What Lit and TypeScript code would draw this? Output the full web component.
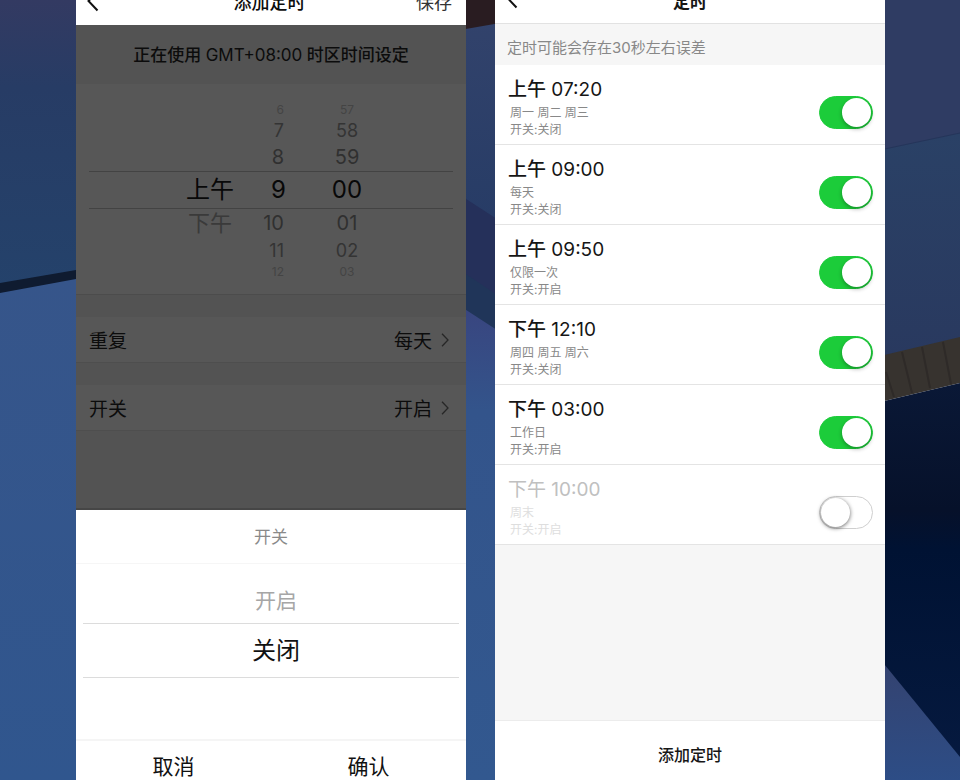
import { LitElement, html, css, svg } from "lit";
import { customElement, property, state } from "lit/decorators.js";

const fontStack = css`Inter, "Noto Sans CJK SC", sans-serif`;

const backIcon = svg`<svg class="back-icon" viewBox="0 0 12 22" aria-hidden="true"><path d="M10.5 1.5 1.5 11l9 9.5" fill="none" stroke="#111" stroke-width="2"/></svg>`;

interface WheelRow {
  period: string;
  hour: string;
  minute: string;
  level: string;
}

const wheel: WheelRow[] = [
  { period: "", hour: "6", minute: "57", level: "edge" },
  { period: "", hour: "7", minute: "58", level: "far" },
  { period: "", hour: "8", minute: "59", level: "near" },
  { period: "上午", hour: "9", minute: "00", level: "current" },
  { period: "下午", hour: "10", minute: "01", level: "near" },
  { period: "", hour: "11", minute: "02", level: "far" },
  { period: "", hour: "12", minute: "03", level: "edge" },
];

interface Timer {
  period: string;
  time: string;
  days: string;
  action: string;
  on: boolean;
}

/* Editor for one timer, with the on/off sheet open over it. */
@customElement("timer-editor")
export class TimerEditor extends LitElement {
  static styles = css`
    :host {
      display: flex;
      flex-direction: column;
      background: #535353;
      color: #0c0c0c;
      font-family: ${fontStack};
    }
    button {
      border: 0;
      padding: 0;
      background: none;
      color: inherit;
      font: inherit;
      cursor: pointer;
    }
    .bar {
      display: grid;
      grid-template-columns: 1fr auto 1fr;
      grid-template-rows: 100%;
      align-items: end;
      height: 25px;
      box-sizing: border-box;
      padding: 0 14px 9px 11px;
      overflow: hidden;
      background: #fff;
      font-size: 18px;
      line-height: 26px;
    }
    .bar h1 {
      margin: 0;
      font-size: 18px;
      font-weight: 500;
    }
    .back {
      display: flex;
      justify-self: start;
      padding-bottom: 4px;
    }
    .back-icon {
      width: 12px;
      height: 22px;
    }
    .save {
      justify-self: end;
      color: #333;
    }
    .zone {
      margin: 0;
      padding: 17px 0 16px;
      font-size: 17px;
      font-weight: 500;
      line-height: 26px;
      text-align: center;
      white-space: nowrap;
    }
    .offset {
      font-weight: 400;
    }
    .wheel {
      padding: 17px 13px 15px;
      background: #575757;
      border-bottom: 1px solid #4c4c4c;
    }
    .row {
      display: grid;
      grid-template-columns: 48px 52px 32px;
      justify-content: center;
      align-items: center;
      padding-left: 7px;
      padding-right: 45px;
      white-space: nowrap;
    }
    .period {
      text-align: center;
    }
    .hour {
      text-align: right;
      padding-right: 2px;
    }
    .minute {
      width: 32px;
      margin-left: 45px;
      text-align: center;
    }
    .edge {
      height: 16px;
      font-size: 12px;
      color: #444;
    }
    .far {
      height: 26px;
      font-size: 18px;
      color: #343434;
    }
    .near {
      height: 28px;
      font-size: 20px;
      color: #303030;
    }
    .near .period {
      font-size: 22px;
      line-height: 28px;
      color: #3a3a3a;
    }
    .current {
      height: 36px;
      border: solid #434343;
      border-width: 1px 0;
      font-size: 24px;
      line-height: 34px;
      color: #080808;
    }
    .current .hour {
      padding-right: 0;
    }
    .setting {
      display: flex;
      align-items: center;
      width: 100%;
      height: 46px;
      margin-top: 22px;
      padding: 0 17px 0 13px;
      background: #575757;
      border-bottom: 1px solid #4e4e4e;
      font-size: 19px;
    }
    .setting .value {
      margin-left: auto;
      margin-right: 9px;
    }
    .chevron {
      width: 8px;
      height: 14px;
    }
    .rest {
      flex: 1;
      min-height: 60px;
      border-bottom: 2px solid #464646;
    }
    .sheet {
      background: #fff;
      color: #111;
    }
    .sheet h2 {
      margin: 0;
      padding: 14px 0 13px;
      border-bottom: 1px solid #f6f6f6;
      color: #8a8a8a;
      font-size: 17px;
      font-weight: 400;
      line-height: 26px;
      text-align: center;
    }
    .options {
      padding: 23px 7px 61px;
      text-align: center;
    }
    .option {
      text-indent: 10px;
      font-size: 21px;
      line-height: 28px;
      padding-bottom: 8px;
      color: #a6a6a6;
    }
    .option.chosen {
      padding: 0;
      border: solid #dcdcdc;
      border-width: 1px 0;
      color: #111;
      font-size: 24px;
      line-height: 53px;
    }
    .actions {
      display: grid;
      grid-template-columns: 1fr 1fr;
      padding-top: 13px;
      border-top: 2px solid #f5f5f5;
      font-size: 21px;
      line-height: 26px;
    }
  `;

  private chevron() {
    return html`<svg class="chevron" viewBox="0 0 8 14" aria-hidden="true">
      <path d="M1 0.8 7 7l-6 6.2" fill="none" stroke="#272727" stroke-width="1.3" />
    </svg>`;
  }

  render() {
    return html`
      <header class="bar">
        <button class="back" aria-label="返回">${backIcon}</button>
        <h1>添加定时</h1>
        <button class="save">保存</button>
      </header>
      <p class="zone">正在使用 <span class="offset">GMT+08:00</span> 时区时间设定</p>
      <div class="wheel">
        ${wheel.map(
          (r) => html`<div class="row ${r.level}">
            <span class="period">${r.period}</span>
            <span class="hour">${r.hour}</span>
            <span class="minute">${r.minute}</span>
          </div>`
        )}
      </div>
      <button class="setting"><span>重复</span><span class="value">每天</span>${this.chevron()}</button>
      <button class="setting"><span>开关</span><span class="value">开启</span>${this.chevron()}</button>
      <div class="rest"></div>
      <section class="sheet">
        <h2>开关</h2>
        <div class="options" role="listbox" aria-label="开关">
          <div class="option" role="option" aria-selected="false">开启</div>
          <div class="option chosen" role="option" aria-selected="true">关闭</div>
        </div>
        <div class="actions">
          <button>取消</button>
          <button>确认</button>
        </div>
      </section>
    `;
  }
}

/* One timer of the list, with its switch. */
@customElement("timer-item")
export class TimerItem extends LitElement {
  @property({ attribute: false }) timer!: Timer;

  static styles = css`
    :host {
      display: block;
      background: #fff;
      border-bottom: 1px solid #e4e4e4;
    }
    .item {
      display: flex;
      justify-content: space-between;
      align-items: flex-start;
      padding: 12px 12px 6px 13px;
      color: #161616;
    }
    .time {
      display: block;
      margin-bottom: 1px;
      font-size: 19px;
      line-height: 26px;
    }
    .period {
      font-weight: 500;
    }
    .detail {
      display: block;
      padding-left: 2px;
      color: #888;
      font-size: 12px;
      line-height: 17px;
    }
    .off .time {
      color: #c0c0c0;
    }
    .off .period {
      font-weight: 400;
    }
    .off .detail {
      color: #dedede;
    }
    .switch {
      appearance: none;
      display: flex;
      flex: none;
      box-sizing: border-box;
      width: 54px;
      height: 33px;
      margin: 19px 0 0;
      padding: 1px;
      border: 1px solid #1ccc3a;
      border-radius: 17px;
      background: #1ccc3a;
      cursor: pointer;
    }
    .switch::before {
      content: "";
      width: 29px;
      height: 29px;
      margin-left: auto;
      border-radius: 50%;
      background: #fff;
      box-shadow: 0 2px 4px rgba(0, 0, 0, 0.3);
    }
    .switch:not(:checked) {
      border: 1px solid #cfcfcf;
      background: #fff;
    }
    .switch:not(:checked)::before {
      margin-left: 0;
      box-shadow: 0 1px 4px rgba(0, 0, 0, 0.6);
    }
  `;

  private toggle(e: Event) {
    this.timer = { ...this.timer, on: (e.target as HTMLInputElement).checked };
  }

  render() {
    const { period, time, days, action, on } = this.timer;
    return html`<label class="item ${on ? "" : "off"}">
      <span>
        <span class="time"><span class="period">${period}</span> ${time}</span>
        <span class="detail">${days}</span>
        <span class="detail">开关:${action}</span>
      </span>
      <input class="switch" type="checkbox" role="switch" .checked=${on} @change=${this.toggle} />
    </label>`;
  }
}

/* List of all timers. */
@customElement("timer-list")
export class TimerList extends LitElement {
  @state() private timers: Timer[] = [
    { period: "上午", time: "07:20", days: "周一 周二 周三", action: "关闭", on: true },
    { period: "上午", time: "09:00", days: "每天", action: "关闭", on: true },
    { period: "上午", time: "09:50", days: "仅限一次", action: "开启", on: true },
    { period: "下午", time: "12:10", days: "周四 周五 周六", action: "关闭", on: true },
    { period: "下午", time: "03:00", days: "工作日", action: "开启", on: true },
    { period: "下午", time: "10:00", days: "周末", action: "开启", on: false },
  ];

  static styles = css`
    :host {
      display: flex;
      flex-direction: column;
      background: #f6f6f6;
      color: #161616;
      font-family: ${fontStack};
    }
    .bar {
      display: grid;
      grid-template-columns: 1fr auto 1fr;
      grid-template-rows: 100%;
      align-items: end;
      height: 24px;
      box-sizing: border-box;
      padding: 0 11px 8px;
      overflow: hidden;
      background: #fff;
      border-bottom: 1px solid #e2e2e2;
    }
    .bar h1 {
      margin: 0;
      font-size: 17px;
      font-weight: 700;
      line-height: 26px;
    }
    .back {
      display: flex;
      justify-self: start;
      padding: 0 0 6px;
      border: 0;
      background: none;
    }
    .back-icon {
      width: 12px;
      height: 22px;
    }
    .note {
      margin: 0;
      padding: 12px 12px 5px;
      color: #888;
      font-size: 15px;
      line-height: 24px;
    }
    .rest {
      flex: 1;
    }
    .add {
      padding: 22px 0 13px;
      border: 0;
      border-top: 1px solid #ececec;
      background: #fff;
      color: #161616;
      font-family: inherit;
      font-size: 16px;
      font-weight: 500;
      line-height: 24px;
      cursor: pointer;
    }
  `;

  render() {
    return html`
      <header class="bar">
        <button class="back" aria-label="返回">${backIcon}</button>
        <h1>定时</h1>
      </header>
      <p class="note">定时可能会存在30秒左右误差</p>
      ${this.timers.map((t) => html`<timer-item .timer=${t}></timer-item>`)}
      <div class="rest"></div>
      <button class="add">添加定时</button>
    `;
  }
}

@customElement("app-root")
export class AppRoot extends LitElement {
  static styles = css`
    :host {
      display: block;
      position: relative;
    }
    .backdrop {
      position: absolute;
      inset: 0;
      width: 100%;
      height: 100%;
    }
    .screens {
      position: relative;
      display: grid;
      grid-template-columns: 1fr 1fr;
      gap: 29px;
      min-height: 100vh;
      box-sizing: border-box;
      padding: 0 75px 0 76px;
    }
  `;

  render() {
    return html`
      <svg class="backdrop" viewBox="0 0 960 780" preserveAspectRatio="none" aria-hidden="true">
        <defs>
          <linearGradient id="wall" x2="0" y2="1">
            <stop offset="0" stop-color="#333a62" />
            <stop offset="0.3" stop-color="#273c65" />
            <stop offset="1" stop-color="#24426b" />
          </linearGradient>
          <linearGradient id="floor" x2="0" y2="1">
            <stop offset="0" stop-color="#36558a" />
            <stop offset="1" stop-color="#30568e" />
          </linearGradient>
          <linearGradient id="mid" x2="0" y2="1">
            <stop offset="0" stop-color="#39457f" />
            <stop offset="0.22" stop-color="#33548b" />
            <stop offset="1" stop-color="#32588f" />
          </linearGradient>
          <linearGradient id="column" x2="0" y2="1">
            <stop offset="0" stop-color="#33436c" />
            <stop offset="1" stop-color="#273c66" />
          </linearGradient>
          <linearGradient id="panel" x2="0" y2="1">
            <stop offset="0" stop-color="#2a4166" />
            <stop offset="1" stop-color="#29395f" />
          </linearGradient>
          <linearGradient id="navy" x2="0" y2="1">
            <stop offset="0" stop-color="#0a1836" />
            <stop offset="0.32" stop-color="#06112a" />
            <stop offset="0.42" stop-color="#001233" />
            <stop offset="1" stop-color="#061a40" />
          </linearGradient>
          <linearGradient id="corner" x2="0" y2="1">
            <stop offset="0" stop-color="#34426f" />
            <stop offset="1" stop-color="#2d4d86" />
          </linearGradient>
        </defs>
        <rect width="480" height="290" fill="url(#wall)" />
        <path d="M0 290 76 277H480V780H0Z" fill="url(#floor)" />
        <path d="M0 283 76 270V279L0 293Z" fill="#0f1b30" />
        <path d="M460 0H500V220H460Z" fill="url(#column)" />
        <path d="M460 0H500V23L460 30Z" fill="#291c21" />
        <path d="M460 195 500 221V340H460Z" fill="#25305a" />
        <path d="M460 270 500 297V340H460Z" fill="#203559" />
        <path d="M460 306 500 332V780H460Z" fill="url(#mid)" />
        <path d="M880 0H960V150H880Z" fill="#2f3c63" />
        <path d="M880 150 960 133V360H880Z" fill="url(#panel)" />
        <path d="M880 150 960 133" stroke="#25355a" fill="none" />
        <path d="M880 356 960 337V383L880 402Z" fill="#37332f" />
        <path d="M880 402 960 383V780H880Z" fill="url(#navy)" />
        <path d="M886 372 894 397M902 352 912 393M922 347 930 388M943 342 951 384" stroke="#2e2a28" stroke-width="2" fill="none" />
        <path d="M880 659 960 757V780H880Z" fill="url(#corner)" />
      </svg>
      <main class="screens">
        <timer-editor></timer-editor>
        <timer-list></timer-list>
      </main>
    `;
  }
}
